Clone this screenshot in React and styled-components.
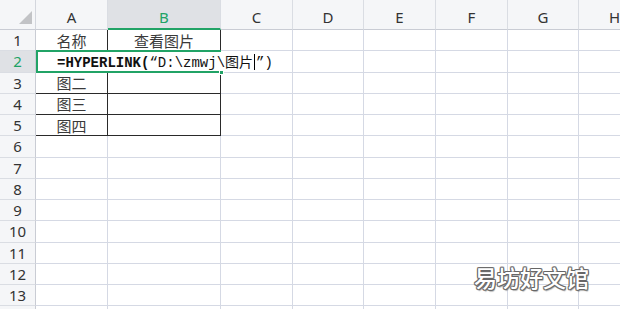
import React from 'react'
import styled, { createGlobalStyle } from 'styled-components'

const GREEN = '#21a366'

const Global = createGlobalStyle`
  html, body { margin: 0; padding: 0; background: #fff; }
  * { box-sizing: border-box; }
`

const Sheet = styled.div`
  position: relative;
  width: 620px;
  height: 309px;
  overflow: hidden;
  display: grid;
  grid-template-columns: 36px 72px 113px 72px 71px 72px 72px 71px 72px;
  grid-template-rows: 30px repeat(14, 21.25px);
  background: #fff;
  font-family: "Noto Sans", "Noto Sans CJK SC", sans-serif;
`

const Corner = styled.div`
  position: relative;
  background: #f5f6f8;
  border-right: 1px solid #d3d6dd;
  border-bottom: 1px solid #c9ccd4;
  &::after {
    content: '';
    position: absolute;
    right: 3px;
    bottom: 5px;
    border-style: solid;
    border-width: 0 0 13px 13px;
    border-color: transparent transparent #c2c3c6 transparent;
  }
`

const ColHead = styled.div`
  display: flex;
  align-items: center;
  justify-content: center;
  padding-top: 5px;
  background: ${p => (p.$active ? '#dfe1e5' : '#f5f6f8')};
  border-right: 1px solid #dadde3;
  border-bottom: ${p => (p.$active ? `2px solid ${GREEN}` : '1px solid #c9ccd4')};
  color: ${p => (p.$active ? GREEN : '#333')};
  font-size: 15px;
`

const RowHead = styled.div`
  display: flex;
  align-items: center;
  justify-content: center;
  background: ${p => (p.$active ? '#dfe1e5' : '#f5f6f8')};
  border-right: 1px solid #c9ccd4;
  border-bottom: 1px solid #dadde3;
  color: ${p => (p.$active ? GREEN : '#333')};
  font-size: 15px;
`

const Cell = styled.div`
  position: relative;
  display: flex;
  align-items: center;
  justify-content: center;
  border-right: 1px solid ${p => (p.$boxed ? '#2a2a2a' : '#d5d9e4')};
  border-bottom: 1px solid ${p => (p.$boxed ? '#2a2a2a' : '#d5d9e4')};
  color: #3a3a3a;
  font-family: "Noto Sans CJK SC", sans-serif;
  font-size: 15px;
`

// in-cell editor lies over A2:B2 while the formula is typed
const Editor = styled.div`
  position: absolute;
  left: 0;
  top: -1px;
  width: 185px;
  height: 23px;
  z-index: 5;
  padding-left: 19px;
  background: #fff;
  border-top: 2px solid ${GREEN};
  border-bottom: 2px solid ${GREEN};
  border-left: 2px solid ${GREEN};
  white-space: nowrap;
  line-height: 19px;
  color: #111;
  font-family: "Liberation Mono", monospace;
  font-size: 14px;
`

const Handle = styled.span`
  position: absolute;
  right: -3px;
  bottom: -4px;
  width: 5px;
  height: 5px;
  background: ${GREEN};
  border: 1px solid #fff;
`

const FuncName = styled.span`
  font-weight: 700;
`

const Han = styled.span`
  font-family: "Noto Sans CJK SC", sans-serif;
`

const Caret = styled.span`
  display: inline-block;
  vertical-align: -3px;
  width: 1px;
  height: 16px;
  margin: 0 1px;
  background: #000;
`

const Watermark = styled.div`
  position: absolute;
  left: 474px;
  top: 260px;
  z-index: 6;
  font-family: "Noto Sans CJK SC", sans-serif;
  font-size: 23px;
  font-weight: 500;
  color: #fff;
  text-shadow:
    1px 0 0 #666, -1px 0 0 #666, 0 1px 0 #666, 0 -1px 0 #666,
    1px 1px 0 #777, -1px -1px 0 #888, 1px -1px 0 #888, -1px 1px 0 #888,
    1px 2px 1px rgba(0,0,0,0.3);
`

const cols = ['A', 'B', 'C', 'D', 'E', 'F', 'G', 'H']
const content = {
  A1: '名称',
  B1: '查看图片',
  A3: '图二',
  A4: '图三',
  A5: '图四',
}

export default function App() {
  const rows = Array.from({ length: 14 }, (_, i) => i + 1)
  return (
    <>
      <Global />
      <Sheet>
        <Corner />
        {cols.map(c => (
          <ColHead key={c} $active={c === 'B'}>{c}</ColHead>
        ))}
        {rows.map(r => (
          <React.Fragment key={r}>
            {/* row 14 only peeks in at the bottom edge */}
            <RowHead $active={r === 2}>{r < 14 ? r : ''}</RowHead>
            {cols.map(c => {
              const id = c + r
              const boxed = r <= 5 && (c === 'A' || c === 'B')
              return (
                <Cell key={id} $boxed={boxed}>
                  {content[id]}
                  {id === 'A2' && (
                    <Editor>
                      <FuncName>=HYPERLINK(</FuncName>
                      <span>{'“D:\\zmwj\\'}</span>
                      <Han>图片</Han>
                      <Caret />
                      <span>{'”)'}</span>
                      <Handle />
                    </Editor>
                  )}
                </Cell>
              )
            })}
          </React.Fragment>
        ))}
        <Watermark>易坊好文馆</Watermark>
      </Sheet>
    </>
  )
}
